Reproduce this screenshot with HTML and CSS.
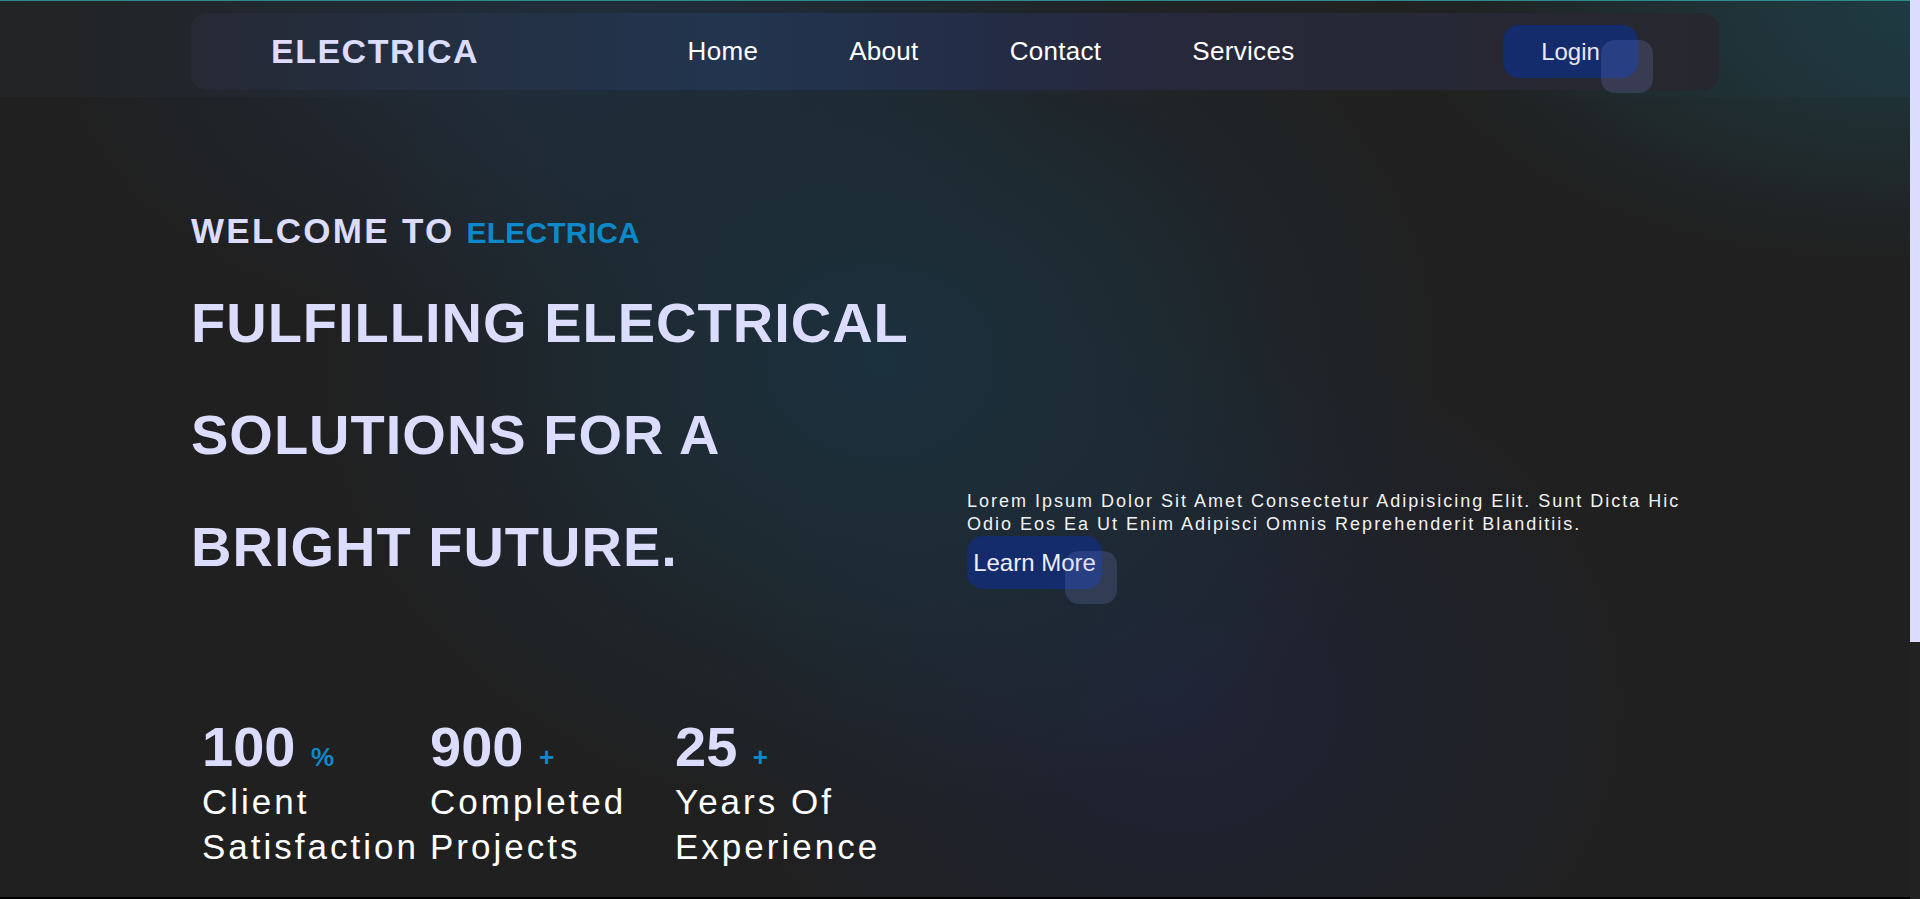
FILE: index.html
```html
<!DOCTYPE html>
<html lang="en">
<head>
<meta charset="utf-8">
<title>Electrica</title>
<link rel="stylesheet" href="styles.css">
</head>
<body>
<div class="layout">
  <div class="content">
    <div class="page">
      <header class="site-header">
        <nav class="nav">
          <a class="logo" href="#">ELECTRICA</a>
          <ul class="nav-links">
            <li><a href="#">Home</a></li>
            <li><a href="#">About</a></li>
            <li><a href="#">Contact</a></li>
            <li><a href="#">Services</a></li>
          </ul>
          <a class="btn" href="#">Login</a>
        </nav>
      </header>
      <main class="hero">
        <div class="hero-left">
          <h3 class="welcome">WELCOME TO <span>ELECTRICA</span></h3>
          <h1 class="headline">FULFILLING ELECTRICAL<br>SOLUTIONS FOR A<br>BRIGHT FUTURE.</h1>
          <div class="stats">
            <div class="stat">
              <div class="stat-num">100 <span>%</span></div>
              <div class="stat-label">Client<br>Satisfaction</div>
            </div>
            <div class="stat">
              <div class="stat-num">900 <span>+</span></div>
              <div class="stat-label">Completed<br>Projects</div>
            </div>
            <div class="stat">
              <div class="stat-num">25 <span>+</span></div>
              <div class="stat-label">Years Of<br>Experience</div>
            </div>
          </div>
        </div>
        <div class="hero-right">
          <p class="lead">lorem ipsum dolor sit amet consectetur adipisicing elit. sunt dicta hic odio eos ea ut enim adipisci omnis reprehenderit blanditiis.</p>
          <a class="btn btn-learn" href="#">Learn More</a>
        </div>
      </main>
    </div>
    <section class="below"></section>
  </div>
  <div class="scroll-rail" aria-hidden="true"><div class="scroll-thumb"></div></div>
</div>
</body>
</html>
```
FILE: styles.css
```css
* { box-sizing: border-box; }

html, body {
  margin: 0;
  padding: 0;
  height: 100%;
  overflow: hidden;
  background: #000;
}

body {
  font-family: "Liberation Sans", Arial, Helvetica, sans-serif;
  color: #fff;
}

.layout {
  display: flex;
  height: 100vh;
}

.content {
  flex: 1;
  min-width: 0;
  height: 100vh;
  overflow: hidden;
  background: #000;
}

.scroll-rail {
  width: 10px;
  flex-shrink: 0;
  background: #222222;
}

.scroll-thumb {
  height: 642px;
  background: #dcdcff;
}

a { text-decoration: none; color: inherit; }

.page {
  height: 897px;
  border-top: 1px solid #2f8c8c;
  background:
    radial-gradient(ellipse 560px 460px at 880px 360px, rgba(27, 50, 64, 0.95) 0%, rgba(27, 50, 64, 0.55) 45%, rgba(27, 50, 64, 0) 100%),
    radial-gradient(ellipse 460px 380px at 1180px 700px, rgba(31, 37, 58, 0.85) 0%, rgba(31, 37, 58, 0) 100%),
    radial-gradient(ellipse 500px 260px at 1910px 0px, rgba(30, 62, 70, 0.9) 0%, rgba(30, 62, 70, 0) 100%),
    radial-gradient(ellipse 500px 300px at 560px 40px, rgba(32, 50, 72, 0.7) 0%, rgba(32, 50, 72, 0) 100%),
    #202020;
}

.site-header {
  height: 96px;
  padding-top: 12px;
  background: linear-gradient(90deg, rgba(40, 44, 48, 0.35) 0%, rgba(30, 46, 62, 0.35) 35%, rgba(36, 38, 44, 0.25) 60%, rgba(34, 34, 36, 0.2) 78%, rgba(31, 58, 66, 0.5) 100%);
}

.nav {
  width: 80%;
  height: 77px;
  margin: 0 auto;
  padding: 0 81px 0 80px;
  border-radius: 16px;
  display: flex;
  align-items: center;
  justify-content: space-between;
  background: linear-gradient(90deg, #262a35 0%, #22354f 35%, #232d47 50%, #27283a 66%, #27272f 100%);
}

.logo {
  font-size: 34px;
  font-weight: bold;
  letter-spacing: 1.5px;
  color: #dcdcff;
}

.nav-links {
  list-style: none;
  margin: 0;
  padding: 0;
  display: flex;
  gap: 91px;
}

.nav-links a {
  font-size: 26px;
  letter-spacing: 0.3px;
  color: #ffffff;
}

.btn {
  position: relative;
  display: inline-flex;
  align-items: center;
  justify-content: center;
  width: 135px;
  height: 53px;
  border-radius: 16px;
  background: #142c6c;
  color: #e8e8f6;
  font-size: 24px;
  white-space: nowrap;
}

.btn::after {
  content: "";
  position: absolute;
  left: 98px;
  top: 15px;
  width: 52px;
  height: 53px;
  border-radius: 14px;
  background: rgba(150, 170, 255, 0.16);
}

.hero {
  width: 80%;
  margin: 0 auto;
  padding-top: 113px;
  display: grid;
  grid-template-columns: 1fr 1fr;
  column-gap: 24px;
  align-items: center;
}

.welcome {
  margin: 0;
  font-size: 35px;
  line-height: 42px;
  letter-spacing: 2.3px;
  font-weight: bold;
  color: #dcdcff;
}

.welcome span {
  font-size: 30px;
  letter-spacing: 0.2px;
  color: #0b89cb;
}

.headline {
  margin: 13px 0 0;
  font-size: 56px;
  line-height: 112px;
  letter-spacing: 1px;
  font-weight: bold;
  color: #dcdcff;
}

.stats {
  margin-top: 112px;
  padding-left: 11px;
  display: grid;
  grid-template-columns: 228px 245px auto;
}

.stat-num {
  font-size: 56px;
  line-height: 64px;
  font-weight: bold;
  color: #dcdcff;
}

.stat-num span {
  font-size: 26px;
  line-height: 1;
  color: #0b89cb;
}

.stat-label {
  font-size: 35px;
  line-height: 45px;
  letter-spacing: 3px;
  color: #ffffff;
}

.lead {
  margin: 0;
  font-size: 18px;
  line-height: 23px;
  letter-spacing: 2px;
  text-transform: capitalize;
  color: #f2f2f2;
}

.btn-learn {
  color: #eeeef8;
}

.below {
  height: 362px;
  background: #000;
}
```
